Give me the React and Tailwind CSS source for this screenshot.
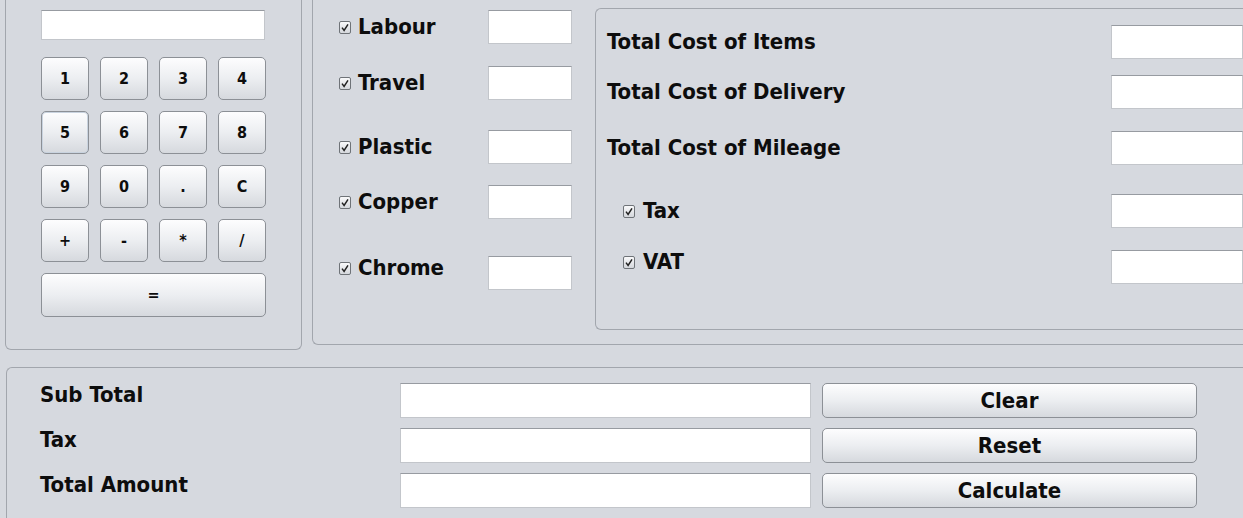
import React from 'react';

// ── Small pieces ───────────────────────────────────────────────────────────
function Check() {
  return (
    <svg width="12" height="13" viewBox="0 0 12 13" aria-hidden="true" className="shrink-0">
      <defs>
        <linearGradient id="cbg" x1="0" y1="0" x2="0" y2="1">
          <stop offset="0" stopColor="#fbfbfc" />
          <stop offset="1" stopColor="#d3d6db" />
        </linearGradient>
      </defs>
      <rect x="0.5" y="0.5" width="11" height="12" rx="1.5" fill="url(#cbg)" stroke="#6f7378" />
      <path d="M3 6.6 L5.1 9.4 L9 3.4" fill="none" stroke="#222" strokeWidth="1.5" />
    </svg>
  );
}

function Field({ className = '' }) {
  return (
    <div className={'bg-white border border-[#c3c6cb] border-t-[#979ba1] ' + className} />
  );
}

function Btn({ children, className = '' }) {
  return (
    <button
      type="button"
      className={
        'flex items-center justify-center rounded-[5px] border border-[#8c9096] ' +
        'bg-gradient-to-b from-[#fdfdfe] via-[#eceef1] to-[#d6d9de] font-bold text-[#0d0d0d] ' +
        className
      }
    >
      {children}
    </button>
  );
}

const KEYS = ['1', '2', '3', '4', '5', '6', '7', '8', '9', '0', '.', 'C', '+', '-', '*', '/'];

const ITEMS = [
  { label: 'Labour', mt: 'mt-[10px]', align: 'items-center' },
  { label: 'Travel', mt: 'mt-[22px]', align: 'items-center' },
  { label: 'Plastic', mt: 'mt-[30px]', align: 'items-center' },
  { label: 'Copper', mt: 'mt-[21px]', align: 'items-center' },
  { label: 'Chrome', mt: 'mt-[37px]', align: 'items-start' },
];

const COSTS = [
  { label: 'Total Cost of Items', mt: '', check: false, align: 'items-center' },
  { label: 'Total Cost of Delivery', mt: 'mt-[16px]', check: false, align: 'items-center' },
  { label: 'Total Cost of Mileage', mt: 'mt-[22px]', check: false, align: 'items-center' },
  { label: 'Tax', mt: 'mt-[29px]', check: true, align: 'items-center' },
  { label: 'VAT', mt: 'mt-[22px]', check: true, align: 'items-start' },
];

const TOTALS = [
  { label: 'Sub Total', btn: 'Clear', mt: '', h: 'h-[35px]' },
  { label: 'Tax', btn: 'Reset', mt: 'mt-[10px]', h: 'h-[35px]' },
  { label: 'Total Amount', btn: 'Calculate', mt: 'mt-[10px]', h: 'h-[35px]' },
];

export default function App() {
  return (
    <div className="w-[1243px] h-[518px] overflow-hidden bg-[#d6d9df] text-[#0d0d0d] font-['DejaVu_Sans_Condensed','DejaVu_Sans',sans-serif]">

      {/* ── Top row ─────────────────────────────────────────────────────── */}
      <div className="flex items-start pl-[5px]">

        {/* Calculator */}
        <div className="w-[297px] h-[350px] shrink-0 border border-t-0 border-[#a2a6ad] rounded-b-[6px] pt-[10px] px-[35px]">
          <Field className="w-[224px] h-[30px]" />
          <div className="grid grid-cols-[repeat(4,48px)] gap-[11px] mt-[17px]">
            {KEYS.map((k) => (
              <Btn
                key={k}
                className={
                  'h-[43px] text-[16px] ' +
                  (k === '5' ? 'border-[#6d7f96] shadow-[inset_0_0_0_1px_#c9d3df]' : '')
                }
              >
                {k}
              </Btn>
            ))}
            <Btn className="col-span-4 h-[44px] text-[16px]">=</Btn>
          </div>
        </div>

        {/* Materials + costs */}
        <div className="ml-[10px] w-[1000px] h-[345px] shrink-0 border border-t-0 border-r-0 border-[#a2a6ad] rounded-bl-[6px] flex items-start">

          <div className="pl-[26px] flex flex-col">
            {ITEMS.map((it) => (
              <div key={it.label} className={'flex ' + it.align + ' ' + it.mt}>
                <div className="w-[149px] flex items-center gap-[7px] text-[22px] font-bold leading-[24px]">
                  <Check />
                  <span>{it.label}</span>
                </div>
                <Field className="w-[84px] h-[34px]" />
              </div>
            ))}
          </div>

          <div className="ml-[23px] mt-[8px] w-[700px] h-[322px] border border-r-0 border-[#a2a6ad] rounded-l-[6px] pt-[16px] pl-[11px]">
            {COSTS.map((c) => (
              <div key={c.label} className={'flex ' + c.align + ' ' + c.mt}>
                <div
                  className={
                    'w-[504px] flex items-center gap-[8px] text-[22px] font-bold leading-[24px] ' +
                    (c.check ? 'pl-[16px]' : '')
                  }
                >
                  {c.check && <Check />}
                  <span>{c.label}</span>
                </div>
                <Field className="w-[132px] h-[34px]" />
              </div>
            ))}
          </div>
        </div>
      </div>

      {/* ── Totals ──────────────────────────────────────────────────────── */}
      <div className="ml-[6px] mt-[17px] w-[1300px] h-[160px] border border-b-0 border-r-0 border-[#a2a6ad] rounded-tl-[6px] pt-[15px] pl-[33px]">
        {TOTALS.map((t) => (
          <div key={t.label} className={'flex items-start ' + t.mt}>
            <div className="w-[360px] text-[22px] font-bold leading-[24px]">{t.label}</div>
            <Field className={'w-[411px] ' + t.h} />
            <Btn className={'ml-[11px] w-[375px] text-[22px] ' + t.h}>{t.btn}</Btn>
          </div>
        ))}
      </div>

    </div>
  );
}
